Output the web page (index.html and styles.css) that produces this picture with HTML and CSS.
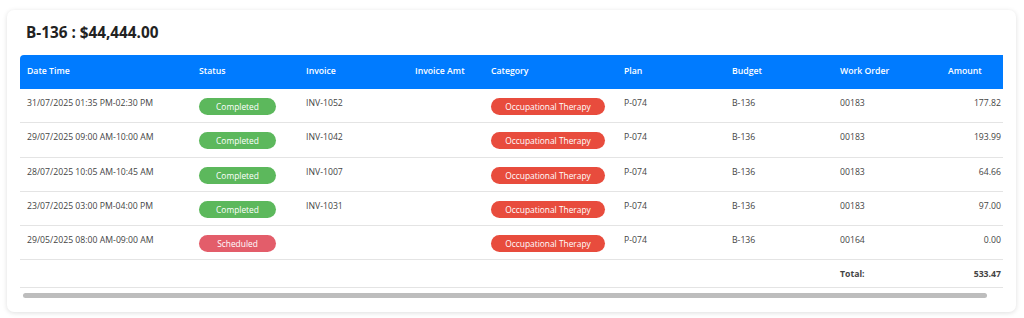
FILE: index.html
```html
<!DOCTYPE html>
<html lang="en">
<head>
<meta charset="utf-8">
<title>B-136 Budget</title>
<link rel="stylesheet" href="styles.css">
</head>
<body>
<section class="card">
  <h2 class="card-title">B-136 : $44,444.00</h2>
  <div class="table-scroll">
    <table class="grid">
      <colgroup>
        <col class="c-date"><col class="c-status"><col class="c-inv"><col class="c-invamt"><col class="c-cat"><col class="c-plan"><col class="c-budget"><col class="c-wo"><col class="c-amt">
      </colgroup>
      <thead>
        <tr>
          <th>Date Time</th><th>Status</th><th>Invoice</th><th>Invoice Amt</th><th>Category</th><th>Plan</th><th>Budget</th><th>Work Order</th><th>Amount</th>
        </tr>
      </thead>
      <tbody>
        <tr>
          <td>31/07/2025 01:35 PM-02:30 PM</td>
          <td><span class="badge badge-done">Completed</span></td>
          <td>INV-1052</td><td></td>
          <td><span class="badge badge-cat">Occupational Therapy</span></td>
          <td>P-074</td><td>B-136</td><td>00183</td><td class="num">177.82</td>
        </tr>
        <tr>
          <td>29/07/2025 09:00 AM-10:00 AM</td>
          <td><span class="badge badge-done">Completed</span></td>
          <td>INV-1042</td><td></td>
          <td><span class="badge badge-cat">Occupational Therapy</span></td>
          <td>P-074</td><td>B-136</td><td>00183</td><td class="num">193.99</td>
        </tr>
        <tr>
          <td>28/07/2025 10:05 AM-10:45 AM</td>
          <td><span class="badge badge-done">Completed</span></td>
          <td>INV-1007</td><td></td>
          <td><span class="badge badge-cat">Occupational Therapy</span></td>
          <td>P-074</td><td>B-136</td><td>00183</td><td class="num">64.66</td>
        </tr>
        <tr>
          <td>23/07/2025 03:00 PM-04:00 PM</td>
          <td><span class="badge badge-done">Completed</span></td>
          <td>INV-1031</td><td></td>
          <td><span class="badge badge-cat">Occupational Therapy</span></td>
          <td>P-074</td><td>B-136</td><td>00183</td><td class="num">97.00</td>
        </tr>
        <tr>
          <td>29/05/2025 08:00 AM-09:00 AM</td>
          <td><span class="badge badge-sched">Scheduled</span></td>
          <td></td><td></td>
          <td><span class="badge badge-cat">Occupational Therapy</span></td>
          <td>P-074</td><td>B-136</td><td>00164</td><td class="num">0.00</td>
        </tr>
      </tbody>
      <tfoot>
        <tr>
          <td></td><td></td><td></td><td></td><td></td><td></td><td></td>
          <td class="total-label">Total:</td><td class="num total-val">533.47</td>
        </tr>
      </tfoot>
    </table>
  </div>
  <div class="scrollbar" aria-hidden="true"><div class="scrollbar-thumb"></div></div>
</section>
</body>
</html>
```

FILE: styles.css
```css
* { box-sizing: border-box; }

html, body {
  margin: 0;
  padding: 0;
  background: #ffffff;
}

body {
  font-family: "Open Sans", "Noto Sans", "Liberation Sans", sans-serif;
  color: #444;
  padding: 10px 8px 6px 7px;
}

.card {
  background: #fff;
  border-radius: 7px;
  box-shadow: 0 1px 5px rgba(0, 0, 0, 0.13);
  padding: 12px 13px 15px 13px;
  height: 302px;
}

.card-title {
  margin: 0 0 13px 6px;
  font-size: 15.3px;
  line-height: 20px;
  font-weight: 700;
  color: #222;
}

.table-scroll {
  overflow: hidden;
}

.grid {
  width: 997px;
  table-layout: fixed;
  border-collapse: collapse;
  font-size: 8.7px;
  line-height: 12px;
}

.c-date { width: 172px; }
.c-status { width: 107px; }
.c-inv { width: 109px; }
.c-invamt { width: 76px; }
.c-cat { width: 133px; }
.c-plan { width: 108px; }
.c-budget { width: 108px; }
.c-wo { width: 108px; }
.c-amt { width: 76px; }

.grid thead th {
  background: #007bff;
  color: #fff;
  font-weight: 600;
  text-align: left;
  padding: 10px 7px 12px;
  white-space: nowrap;
}

.grid thead th:first-child {
  border-top-left-radius: 4px;
}

.grid td {
  padding: 8px 7px 7px;
  vertical-align: top;
  border-bottom: 1px solid #e4e4e4;
  white-space: nowrap;
}

.grid tbody td {
  padding-bottom: 7.3px;
}

.grid td.num {
  text-align: right;
  padding-right: 16px;
}

.total-label,
.total-val {
  font-weight: 700;
  color: #444;
}

.badge {
  display: block;
  height: 17px;
  line-height: 17px;
  margin-top: 1px;
  border-radius: 9px;
  color: #fff;
  font-size: 8.4px;
  text-align: center;
}

.badge-done {
  width: 77px;
  background: #5cb85c;
}

.badge-sched {
  width: 77px;
  background: #e35d6a;
}

.badge-cat {
  width: 114px;
  background: #e84c3d;
}

.scrollbar {
  margin-top: 5px;
  height: 5px;
  padding: 0 16px 0 3px;
}

.scrollbar-thumb {
  height: 5px;
  border-radius: 3px;
  background: #bdbdbd;
}
```
